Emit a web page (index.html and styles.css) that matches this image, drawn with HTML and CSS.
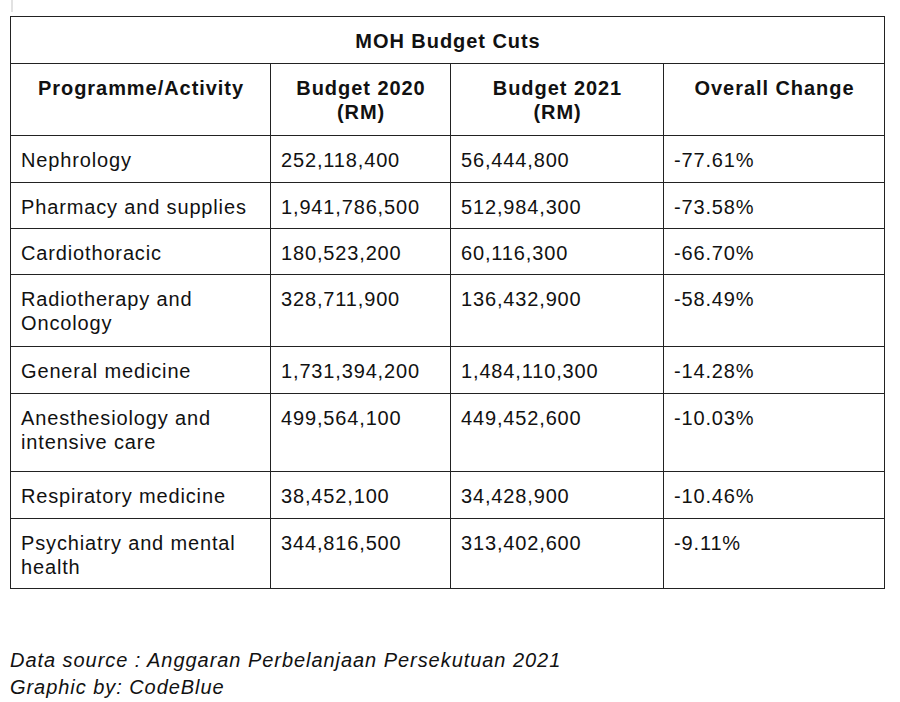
FILE: index.html
```html
<!DOCTYPE html>
<html>
<head>
<meta charset="utf-8">
<link rel="stylesheet" href="styles.css">
</head>
<body>
<div class="page">
  <div class="cursor"></div>
  <table class="budget">
    <colgroup>
      <col class="c1"><col class="c2"><col class="c3"><col class="c4">
    </colgroup>
    <tr class="h47"><th class="title" colspan="4">MOH Budget Cuts</th></tr>
    <tr class="h72">
      <th>Programme/Activity</th>
      <th>Budget 2020<br>(RM)</th>
      <th>Budget 2021<br>(RM)</th>
      <th>Overall Change</th>
    </tr>
    <tr class="h47"><td>Nephrology</td><td>252,118,400</td><td>56,444,800</td><td>-77.61%</td></tr>
    <tr class="h46"><td>Pharmacy and supplies</td><td>1,941,786,500</td><td>512,984,300</td><td>-73.58%</td></tr>
    <tr class="h46"><td>Cardiothoracic</td><td>180,523,200</td><td>60,116,300</td><td>-66.70%</td></tr>
    <tr class="h72"><td>Radiotherapy and<br>Oncology</td><td>328,711,900</td><td>136,432,900</td><td>-58.49%</td></tr>
    <tr class="h47"><td>General medicine</td><td>1,731,394,200</td><td>1,484,110,300</td><td>-14.28%</td></tr>
    <tr class="h78"><td>Anesthesiology and<br>intensive care</td><td>499,564,100</td><td>449,452,600</td><td>-10.03%</td></tr>
    <tr class="h47"><td>Respiratory medicine</td><td>38,452,100</td><td>34,428,900</td><td>-10.46%</td></tr>
    <tr class="h70"><td>Psychiatry and mental<br>health</td><td>344,816,500</td><td>313,402,600</td><td>-9.11%</td></tr>
  </table>
  <div class="note">
    <p>Data source : Anggaran Perbelanjaan Persekutuan 2021</p>
    <p>Graphic by: CodeBlue</p>
  </div>
</div>
</body>
</html>
```

FILE: styles.css
```css
html, body {
  margin: 0;
  padding: 0;
  background: #fff;
}
body {
  font-family: "Liberation Sans", Arial, sans-serif;
  color: #111;
  font-size: 20px;
  letter-spacing: 0.85px;
}
.page {
  padding-left: 10px;
  width: 874px;
}
.cursor {
  width: 2px;
  height: 12px;
  margin-left: 1px;
  margin-bottom: 4px;
  background: #e2e2e2;
}
.budget {
  border-collapse: collapse;
  table-layout: fixed;
  width: 874px;
}
.c1 { width: 260px; }
.c2 { width: 180px; }
.c3 { width: 213px; }
.c4 { width: 221px; }
.budget th,
.budget td {
  border: 1px solid #222;
  padding: 12px 9px 0 10px;
  vertical-align: top;
  line-height: 24px;
  text-align: left;
  white-space: nowrap;
}
.budget th {
  font-weight: bold;
  text-align: center;
  letter-spacing: 0.95px;
}
.h46 { height: 46px; }
.h47 { height: 47px; }
.h70 { height: 70px; }
.h72 { height: 72px; }
.h78 { height: 78px; }
.note {
  margin-top: 58px;
  font-style: italic;
  letter-spacing: 0.95px;
}
.note p {
  margin: 0;
  line-height: 27px;
}
```
